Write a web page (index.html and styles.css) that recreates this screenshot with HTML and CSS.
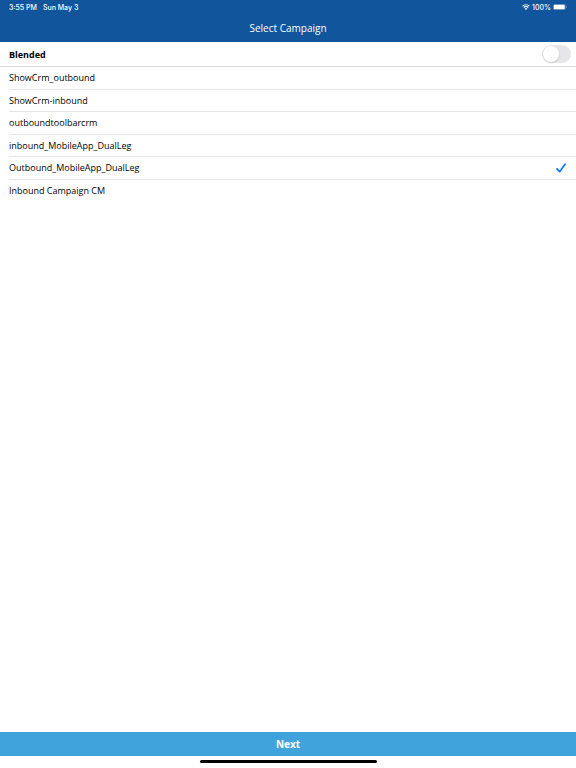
FILE: index.html
```html
<!DOCTYPE html>
<html lang="en">
<head>
    <meta charset="UTF-8">
    <meta name="viewport" content="width=device-width, initial-scale=1">
    <title>Select Campaign</title>
    <link rel="stylesheet" href="styles.css">
</head>
<body>
<header class="header">
    <div class="status">
        <span>3:55 PM</span>
        <span>Sun May 3</span>
        <div class="status-right">
            <svg class="wifi" viewBox="0 0 16 12">
                <path d="M1 4.3a10.2 10.2 0 0 1 14 0M3.5 7a6.6 6.6 0 0 1 9 0" fill="none" stroke="#fff" stroke-width="2.2"/>
                <path d="M8 12L5.4 9.3a3.8 3.8 0 0 1 5.2 0z" fill="#fff"/>
            </svg>
            <span>100%</span>
            <svg class="battery" viewBox="0 0 28 12">
                <rect x=".5" y=".5" width="24" height="11" rx="3" fill="none" stroke="#fff" stroke-opacity=".5"/>
                <rect x="1.500" y="1.500" width="22" height="9" rx="2" fill="#fff"/>
                <path d="M26 4v4c2-.8 2-3.200 0-4z" fill="#fff" fill-opacity=".5"/>
            </svg>
        </div>
    </div>
    <h1 class="title">Select Campaign</h1>
</header>
<main class="main">
    <div class="blended">
        <label for="blended">Blended</label>
        <input class="switch" type="checkbox" role="switch" id="blended">
    </div>
    <div class="list" role="radiogroup" aria-label="Campaign">
        <label class="row">
            <input type="radio" name="campaign">
            <span>ShowCrm_outbound</span>
        </label>
        <label class="row">
            <input type="radio" name="campaign">
            <span>ShowCrm-inbound</span>
        </label>
        <label class="row">
            <input type="radio" name="campaign">
            <span>outboundtoolbarcrm</span>
        </label>
        <label class="row">
            <input type="radio" name="campaign">
            <span>inbound_MobileApp_DualLeg</span>
        </label>
        <label class="row">
            <input type="radio" name="campaign" checked>
            <span>Outbound_MobileApp_DualLeg</span>
            <svg class="check" viewBox="0 0 10 10">
                <path d="M1 5.800L3.700 8.700L9 1.200" fill="none" stroke="#0a7aff" stroke-width="1.700" stroke-linecap="round" stroke-linejoin="round"/>
            </svg>
        </label>
        <label class="row">
            <input type="radio" name="campaign">
            <span>Inbound Campaign CM</span>
        </label>
    </div>
</main>
<footer class="footer">
    <button class="next" type="button">Next</button>
    <div class="home"></div>
</footer>
</body>
</html>
```

FILE: styles.css
```css
* {
    margin: 0;
    padding: 0;
    box-sizing: border-box;
}

body {
    min-height: 100vh;
    display: flex;
    flex-direction: column;
    background: #fff;
    color: #000;
    font-family: "Open Sans", sans-serif;
    font-size: 9px;
    font-weight: 500;
}

.header {
    background: #11559c;
    color: #fff;
}

.status {
    display: flex;
    align-items: center;
    gap: 6px;
    height: 14px;
    padding: 0 9px;
    font-family: Inter, sans-serif;
    font-size: 7px;
}

.status-right {
    margin-left: auto;
    display: flex;
    align-items: center;
    gap: 2px;
}

.wifi {
    width: 8px;
    height: 6px;
}

.battery {
    width: 14px;
    height: 6px;
}

.title {
    height: 28px;
    line-height: 28px;
    text-align: center;
    font-size: 10px;
    font-weight: 500;
}

.main {
    flex: 1;
}

.blended {
    display: flex;
    align-items: center;
    justify-content: space-between;
    height: 25px;
    padding: 0 5px 0 9px;
    border-bottom: 1px solid #dcdcde;
    font-weight: bold;
}

.switch {
    appearance: none;
    width: 29px;
    height: 18px;
    padding: 1px;
    border-radius: 9px;
    background: #e6e6e8;
}

.switch::before {
    content: "";
    display: block;
    width: 16px;
    height: 16px;
    border-radius: 50%;
    background: #fff;
    box-shadow: 0 1px 2px rgba(0, 0, 0, .15);
}

.switch:checked {
    background: #34c759;
}

.switch:checked::before {
    margin-left: 11px;
}

.list {
    display: grid;
    grid-auto-rows: 1fr;
    height: 135px;
    padding-left: 9px;
}

.row {
    display: flex;
    align-items: center;
    border-bottom: 1px solid #e6e6e6;
    padding-right: 10px;
}

.row:last-child {
    border-bottom: 0;
}

.row input {
    appearance: none;
}

.check {
    width: 10px;
    height: 10px;
    margin-left: auto;
}

.next {
    display: block;
    width: 100%;
    height: 24px;
    border: 0;
    background: #40a3dc;
    color: #fff;
    font: bold 10px "Open Sans", sans-serif;
}

.home {
    width: 177px;
    height: 3px;
    margin: 4px auto 5px;
    border-radius: 2px;
    background: #000;
}
```
